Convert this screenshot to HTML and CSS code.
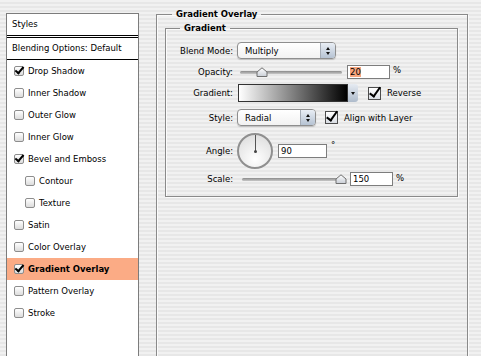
FILE: index.html
```html
<!DOCTYPE html>
<html lang="en">
  <head>
    <meta charset="UTF-8" />
    <title>Layer Style - Gradient Overlay</title>
    <link rel="stylesheet" href="styles.css">
  </head>
  <body>

    <div class="window">

      <div class="styles-list">
        <div class="list-head">Styles</div>
        <div class="list-blend">Blending Options: Default</div>
        <ul class="fx">
          <li><span class="cb on"></span>Drop Shadow</li>
          <li><span class="cb"></span>Inner Shadow</li>
          <li><span class="cb"></span>Outer Glow</li>
          <li><span class="cb"></span>Inner Glow</li>
          <li><span class="cb on"></span>Bevel and Emboss</li>
          <li class="sub"><span class="cb"></span>Contour</li>
          <li class="sub"><span class="cb"></span>Texture</li>
          <li><span class="cb"></span>Satin</li>
          <li><span class="cb"></span>Color Overlay</li>
          <li class="active"><span class="cb on"></span>Gradient Overlay</li>
          <li><span class="cb"></span>Pattern Overlay</li>
          <li><span class="cb"></span>Stroke</li>
        </ul>
      </div>

      <fieldset class="outer">
        <legend>Gradient Overlay</legend>

        <fieldset class="inner">
          <legend>Gradient</legend>

          <div class="row r-blend">
            <label class="lbl">Blend Mode:</label>
            <div class="select w-blend">
              <span class="sel-text">Multiply</span>
              <span class="stepper"><i class="up"></i><i class="down"></i></span>
            </div>
          </div>

          <div class="row r-opacity">
            <label class="lbl">Opacity:</label>
            <div class="slider s-opacity">
              <div class="track"></div>
              <svg class="thumb" style="left: 16px" width="12" height="10" viewBox="0 0 12 10">
                <defs>
                  <linearGradient id="tg1" x1="0" y1="0" x2="0" y2="1">
                    <stop offset="0" stop-color="#ffffff"/>
                    <stop offset="1" stop-color="#c9ced6"/>
                  </linearGradient>
                </defs>
                <path d="M1 9.5 V5 L6 0.8 L11 5 V9.5 Z" fill="url(#tg1)" stroke="#6f6f6f" stroke-width="1"/>
              </svg>
            </div>
            <div class="num"><span class="hl">20</span></div>
            <span class="unit">%</span>
          </div>

          <div class="row r-gradient">
            <label class="lbl">Gradient:</label>
            <div class="gradient">
              <div class="ramp"></div>
              <div class="drop"><i class="down"></i></div>
            </div>
            <span class="bigcb"></span>
            <span class="cb-label">Reverse</span>
          </div>

          <div class="row r-style">
            <label class="lbl">Style:</label>
            <div class="select w-style">
              <span class="sel-text">Radial</span>
              <span class="stepper"><i class="up"></i><i class="down"></i></span>
            </div>
            <span class="bigcb"></span>
            <span class="cb-label">Align with Layer</span>
          </div>

          <div class="row r-angle">
            <label class="lbl">Angle:</label>
            <div class="dial">
              <div class="hand"></div>
              <div class="pin"></div>
            </div>
            <div class="num angle-num">90</div>
            <span class="deg">&deg;</span>
          </div>

          <div class="row r-scale">
            <label class="lbl">Scale:</label>
            <div class="slider s-scale">
              <div class="track"></div>
              <svg class="thumb" style="left: 93px" width="12" height="10" viewBox="0 0 12 10">
                <defs>
                  <linearGradient id="tg2" x1="0" y1="0" x2="0" y2="1">
                    <stop offset="0" stop-color="#ffffff"/>
                    <stop offset="1" stop-color="#c9ced6"/>
                  </linearGradient>
                </defs>
                <path d="M1 9.5 V5 L6 0.8 L11 5 V9.5 Z" fill="url(#tg2)" stroke="#6f6f6f" stroke-width="1"/>
              </svg>
            </div>
            <div class="num">150</div>
            <span class="unit">%</span>
          </div>

        </fieldset>
      </fieldset>

    </div>

  </body>
</html>
```

FILE: styles.css
```css
html, body {
    margin: 0;
    padding: 0;
}

body {
    width: 481px;
    height: 356px;
    overflow: hidden;
    font-family: "DejaVu Sans", Verdana, sans-serif;
    font-size: 8.5px;
    color: #000;
    background: repeating-linear-gradient(to bottom, #f1f1f1 0, #f1f1f1 2px, #e7e7e7 2px, #e7e7e7 4px);
}

.window {
    display: flex;
    align-items: flex-start;
    height: 356px;
}

/* ---- left list of effects ---- */

.styles-list {
    box-sizing: border-box;
    width: 133px;
    height: 360px;
    margin: 13px 0 0 6px;
    background: #fff;
    border: 1px solid #7c7c7c;
    border-bottom: 0;
}

.list-head {
    height: 21px;
    line-height: 21px;
    padding-left: 5px;
    border-bottom: 1px solid #000;
}

.list-blend {
    height: 21px;
    line-height: 21px;
    padding-left: 5px;
    border-top: 1px solid #000;
    margin-top: 1px;
    border-bottom: 1px solid #000;
}

.fx {
    list-style: none;
    margin: 0;
    padding: 0;
}

.fx li {
    display: flex;
    align-items: center;
    height: 22px;
    padding-left: 7px;
}

.fx li.sub {
    padding-left: 18px;
}

.fx li.active {
    background: #fbab85;
    font-weight: bold;
}

.cb {
    box-sizing: border-box;
    width: 10px;
    height: 10px;
    margin-right: 4px;
    border: 1px solid #8d8d8d;
    border-radius: 2px;
    background: linear-gradient(#ffffff, #dcdcdc);
    position: relative;
}

.cb.on::after {
    content: "";
    position: absolute;
    left: 2px;
    top: -2px;
    width: 3px;
    height: 7px;
    border-right: 2px solid #000;
    border-bottom: 2px solid #000;
    transform: rotate(40deg);
}

/* ---- right settings ---- */

fieldset {
    margin: 0;
    padding: 0;
    border: 1px solid #8a8a8a;
    box-shadow: inset 1px 1px 0 #fbfbfb, 1px 1px 0 #fbfbfb;
}

legend {
    font-weight: bold;
    padding: 0 4px;
    line-height: 11px;
}

.outer {
    box-sizing: border-box;
    width: 312px;
    height: 360px;
    margin: 9px 0 0 17px;
}

.outer > legend {
    margin-left: 15px;
}

.inner {
    margin: 3px 9px 0 8px;
    padding-bottom: 10px;
}

.inner > legend {
    margin-left: 14px;
}

.row {
    display: flex;
    align-items: center;
}

.lbl {
    width: 67px;
    margin-right: 4px;
    text-align: right;
}

.r-blend { height: 17px; margin-top: 8px; }
.r-opacity { height: 15px; margin-top: 5px; }
.r-gradient { height: 18px; margin-top: 5px; }
.r-style { height: 17px; margin-top: 7px; }
.r-angle { height: 36px; margin-top: 7px; }
.r-scale { height: 14px; margin-top: 3px; }

/* popup menus */

.select {
    box-sizing: border-box;
    height: 17px;
    display: flex;
    align-items: center;
    border: 1px solid #8e8e8e;
    border-radius: 4px;
    background: linear-gradient(#ffffff, #f2f2f2);
    box-shadow: 0 1px 1px rgba(0, 0, 0, 0.18);
    overflow: hidden;
}

.w-blend { width: 99px; }
.w-style { width: 79px; }

.sel-text {
    flex: 1;
    padding-left: 7px;
}

.stepper {
    width: 14px;
    height: 100%;
    display: flex;
    flex-direction: column;
    align-items: center;
    justify-content: center;
    gap: 2px;
    border-left: 1px solid #a5acb6;
    background: linear-gradient(#e9eef5, #b6c3d3);
}

.up, .down {
    display: block;
    width: 0;
    height: 0;
    border-left: 2.5px solid transparent;
    border-right: 2.5px solid transparent;
}

.up { border-bottom: 3px solid #111; }
.down { border-top: 3px solid #111; }

/* sliders */

.slider {
    position: relative;
    height: 12px;
}

.s-opacity {
    width: 102px;
    margin-left: 3px;
}

.s-scale {
    width: 103px;
    margin-left: 5px;
}

.track {
    position: absolute;
    left: 0;
    right: 0;
    top: 5px;
    height: 3px;
    border-radius: 2px;
    background: linear-gradient(#8a8a8a, #c8c8c8);
}

.thumb {
    position: absolute;
    top: 1px;
}

.num {
    box-sizing: border-box;
    width: 43px;
    height: 14px;
    line-height: 12px;
    margin-left: 5px;
    padding-left: 2px;
    border: 1px solid #7d7d7d;
    background: #fff;
}

.hl {
    background: #f7a57e;
}

.unit {
    margin-left: 3px;
    align-self: flex-start;
    margin-top: 1px;
}

/* gradient swatch */

.gradient {
    display: flex;
    height: 18px;
    margin-left: 1px;
}

.ramp {
    box-sizing: border-box;
    width: 110px;
    height: 18px;
    border: 1px solid #333;
    background: linear-gradient(to right, #ffffff, #000000);
}

.drop {
    width: 10px;
    height: 18px;
    display: flex;
    align-items: center;
    justify-content: center;
    background: linear-gradient(#e6ebf2, #aebbcb);
    border-radius: 0 3px 3px 0;
}

.bigcb {
    box-sizing: border-box;
    position: relative;
    width: 13px;
    height: 13px;
    margin-left: 10px;
    border: 1px solid #4c4c4c;
    background: linear-gradient(#ffffff, #d9dde3);
}

.bigcb::after {
    content: "";
    position: absolute;
    left: 3px;
    top: -3px;
    width: 4px;
    height: 10px;
    border-right: 2px solid #000;
    border-bottom: 2px solid #000;
    transform: rotate(35deg);
}

.r-style .bigcb {
    margin-left: 9px;
}

.cb-label {
    margin-left: 6px;
}

/* angle dial */

.dial {
    box-sizing: border-box;
    position: relative;
    width: 36px;
    height: 36px;
    border: 2px solid #8f8f8f;
    border-radius: 50%;
    background: radial-gradient(circle at 50% 75%, #ffffff, #d9d9d9);
}

.hand {
    position: absolute;
    left: 16px;
    top: 0;
    width: 1px;
    height: 16px;
    background: #555;
}

.pin {
    position: absolute;
    left: 15px;
    top: 15px;
    width: 3px;
    height: 3px;
    border-radius: 50%;
    background: #444;
}

.angle-num {
    width: 49px;
}

.deg {
    align-self: flex-start;
    margin-left: 4px;
    margin-top: 7px;
}
```
